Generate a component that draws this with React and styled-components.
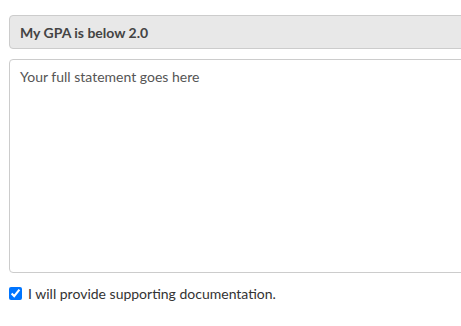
import React from 'react';
import styled, { createGlobalStyle } from 'styled-components';

const GlobalStyle = createGlobalStyle`
    html, body {
        margin: 0;
        padding: 0;
        background: #fff;
        overflow: hidden;
    }
    body {
        font-family: Lato, 'Liberation Sans', sans-serif;
        font-size: 14px;
        color: #333;
    }
`;

const Viewport = styled.div`
    width: 461px;
    overflow: hidden;
`;

const Form = styled.div`
    display: flex;
    flex-direction: column;
    width: 480px;
    padding: 15px 0 0 9px;
`;

const ReadOnlyField = styled.div`
    box-sizing: border-box;
    height: 34px;
    padding: 0 10px;
    display: flex;
    align-items: center;
    background: #e8e8e8;
    border: 1px solid #ccc;
    border-radius: 4px;
    font-weight: 700;
    color: #444;
`;

const Statement = styled.textarea`
    box-sizing: border-box;
    margin-top: 10px;
    height: 214px;
    padding: 8px 10px;
    border: 1px solid #ccc;
    border-radius: 4px;
    font-family: inherit;
    font-size: 14px;
    color: #333;
    resize: none;
    outline: none;

    &::placeholder {
        color: #555;
        opacity: 1;
    }
`;

const CheckRow = styled.label`
    display: flex;
    align-items: center;
    gap: 6px;
    margin-top: 12px;
    color: #333;
`;

const Check = styled.input`
    margin: 0;
    width: 13px;
    height: 13px;
    accent-color: #0075ff;
`;

export default function App() {
    return (
        <>
            <GlobalStyle />
            <Viewport>
                <Form>
                    <ReadOnlyField>My GPA is below 2.0</ReadOnlyField>
                    <Statement placeholder="Your full statement goes here" />
                    <CheckRow>
                        <Check type="checkbox" defaultChecked />
                        I will provide supporting documentation.
                    </CheckRow>
                </Form>
            </Viewport>
        </>
    );
}
